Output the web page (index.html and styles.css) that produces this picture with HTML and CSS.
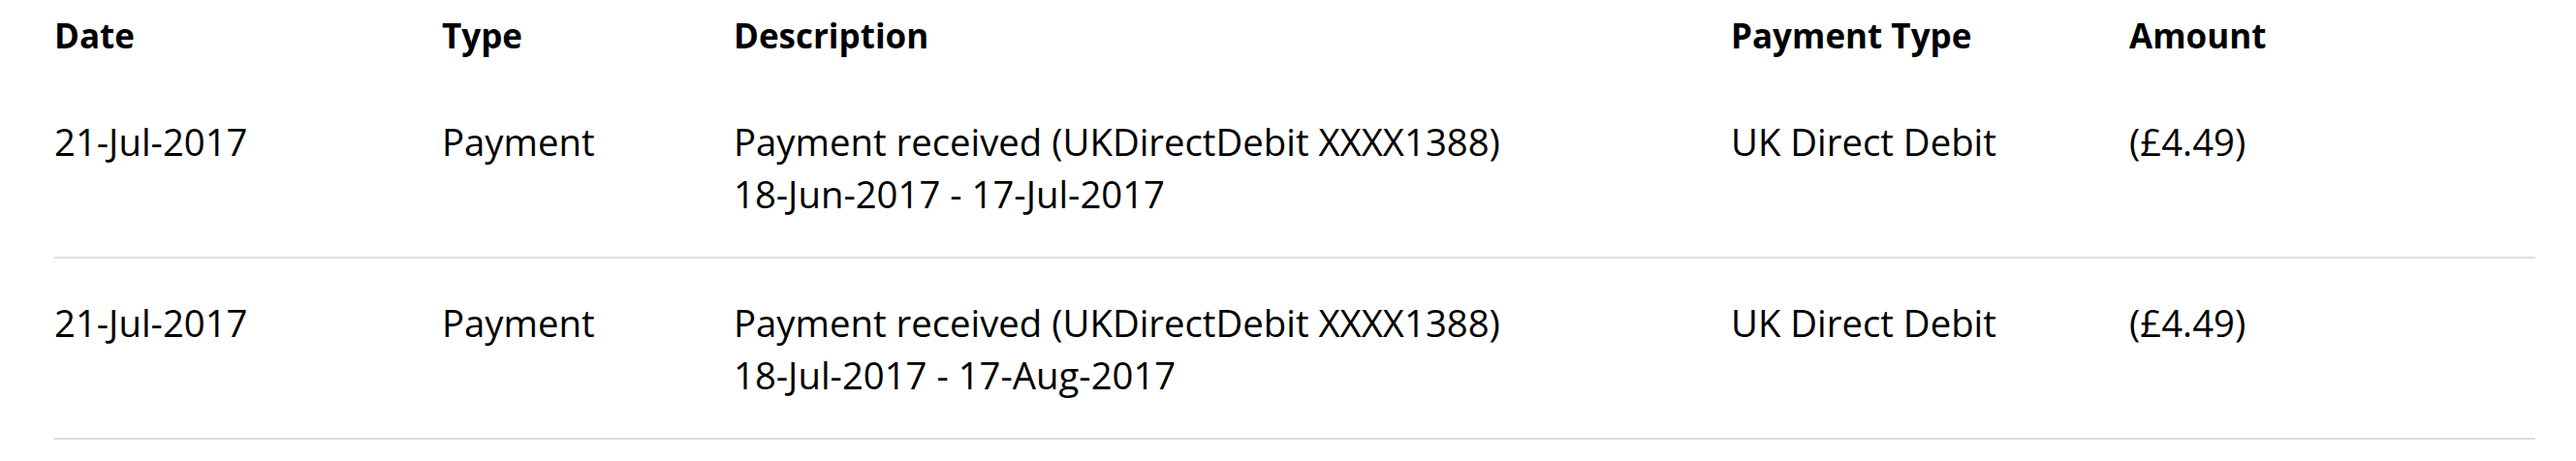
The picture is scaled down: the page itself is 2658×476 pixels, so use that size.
FILE: index.html
```html
<!DOCTYPE html>
<html>
<head>
<link rel="stylesheet" href="styles.css">
</head>
<body>
    <div class="content">
        <table class="transactions">
            <colgroup>
                <col class="col-date">
                <col class="col-type">
                <col class="col-description">
                <col class="col-payment-type">
                <col class="col-amount">
            </colgroup>
            <thead>
                <tr>
                    <th>Date</th>
                    <th>Type</th>
                    <th>Description</th>
                    <th>Payment Type</th>
                    <th>Amount</th>
                </tr>
            </thead>
            <tbody>
                <tr>
                    <td>21-Jul-2017</td>
                    <td>Payment</td>
                    <td>Payment received (UKDirectDebit XXXX1388)<br>18-Jun-2017 - 17-Jul-2017</td>
                    <td>UK Direct Debit</td>
                    <td>(£4.49)</td>
                </tr>
                <tr>
                    <td>21-Jul-2017</td>
                    <td>Payment</td>
                    <td>Payment received (UKDirectDebit XXXX1388)<br>18-Jul-2017 - 17-Aug-2017</td>
                    <td>UK Direct Debit</td>
                    <td>(£4.49)</td>
                </tr>
            </tbody>
        </table>
    </div>
</body>
</html>
```

FILE: styles.css
```css
body {
    margin: 0;
    font-family: "Open Sans", Arial, sans-serif;
    background-color: #FFFFFF;
    color: #000000;
}

.content {
    padding: 0 42px 0 56px;
}

.transactions {
    width: 2560px;
    border-collapse: collapse;
    table-layout: fixed;
}

.col-date { width: 400px; }
.col-type { width: 301px; }
.col-description { width: 1029px; }
.col-payment-type { width: 411px; }
.col-amount { width: 419px; }

.transactions th {
    text-align: left;
    font-size: 35px;
    font-weight: 700;
    line-height: 47px;
    padding: 13px 0 20px;
}

.transactions td {
    text-align: left;
    vertical-align: top;
    font-size: 38.3px;
    line-height: 54px;
    padding: 39px 0 38px;
    border-bottom: 2px solid #DDDDDD;
}
```
